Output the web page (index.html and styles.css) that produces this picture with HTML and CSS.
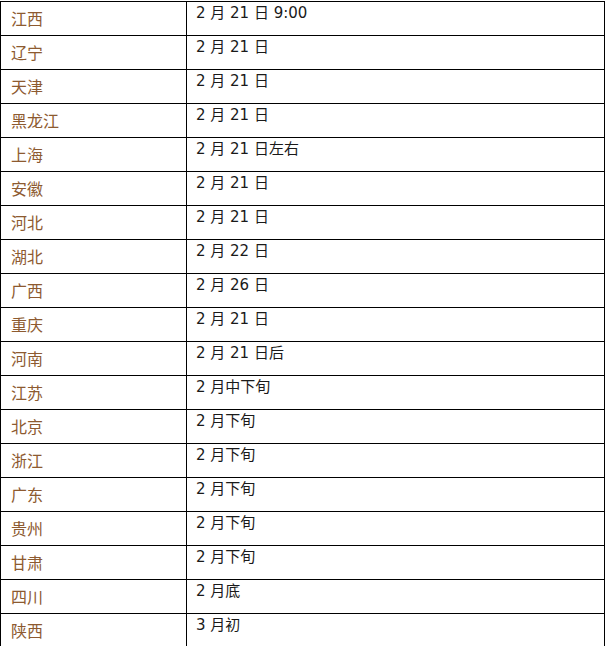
FILE: index.html
```html
<!DOCTYPE html>
<html lang="zh-CN">
<head>
<meta charset="utf-8">
<title>开学时间</title>
<link rel="stylesheet" href="styles.css">
</head>
<body>
<table class="schedule">
  <tbody>
    <tr><td class="region">江西</td><td class="date">2 月 21 日 9:00</td></tr>
    <tr><td class="region">辽宁</td><td class="date">2 月 21 日</td></tr>
    <tr><td class="region">天津</td><td class="date">2 月 21 日</td></tr>
    <tr><td class="region">黑龙江</td><td class="date">2 月 21 日</td></tr>
    <tr><td class="region">上海</td><td class="date">2 月 21 日左右</td></tr>
    <tr><td class="region">安徽</td><td class="date">2 月 21 日</td></tr>
    <tr><td class="region">河北</td><td class="date">2 月 21 日</td></tr>
    <tr><td class="region">湖北</td><td class="date">2 月 22 日</td></tr>
    <tr><td class="region">广西</td><td class="date">2 月 26 日</td></tr>
    <tr><td class="region">重庆</td><td class="date">2 月 21 日</td></tr>
    <tr><td class="region">河南</td><td class="date">2 月 21 日后</td></tr>
    <tr><td class="region">江苏</td><td class="date">2 月中下旬</td></tr>
    <tr><td class="region">北京</td><td class="date">2 月下旬</td></tr>
    <tr><td class="region">浙江</td><td class="date">2 月下旬</td></tr>
    <tr><td class="region">广东</td><td class="date">2 月下旬</td></tr>
    <tr><td class="region">贵州</td><td class="date">2 月下旬</td></tr>
    <tr><td class="region">甘肃</td><td class="date">2 月下旬</td></tr>
    <tr><td class="region">四川</td><td class="date">2 月底</td></tr>
    <tr><td class="region">陕西</td><td class="date">3 月初</td></tr>
  </tbody>
</table>
</body>
</html>
```
FILE: styles.css
```css
html, body {
  margin: 0;
  padding: 0;
  background: #fff;
}
body {
  padding-top: 1px;
  font-family: "DejaVu Sans", "Noto Sans CJK SC", sans-serif;
  font-size: 16px;
}
.schedule {
  border-collapse: collapse;
  width: 605px;
  table-layout: fixed;
}
.schedule td {
  border: 1px solid #000;
  height: 34px;
  padding: 0;
  box-sizing: border-box;
}
.region {
  width: 186px;
  color: #8d5a30;
  padding-left: 10px !important;
  vertical-align: middle;
  font-family: "Noto Sans CJK SC", sans-serif;
  font-size: 16px;
  padding-bottom: 2px !important;
}
.date {
  color: #1a1a1a;
  vertical-align: top;
  padding-left: 9px !important;
  padding-top: 1px !important;
  font-family: "DejaVu Sans", "Noto Sans CJK SC", sans-serif;
  font-size: 15px;
  line-height: 20px;
}
```
